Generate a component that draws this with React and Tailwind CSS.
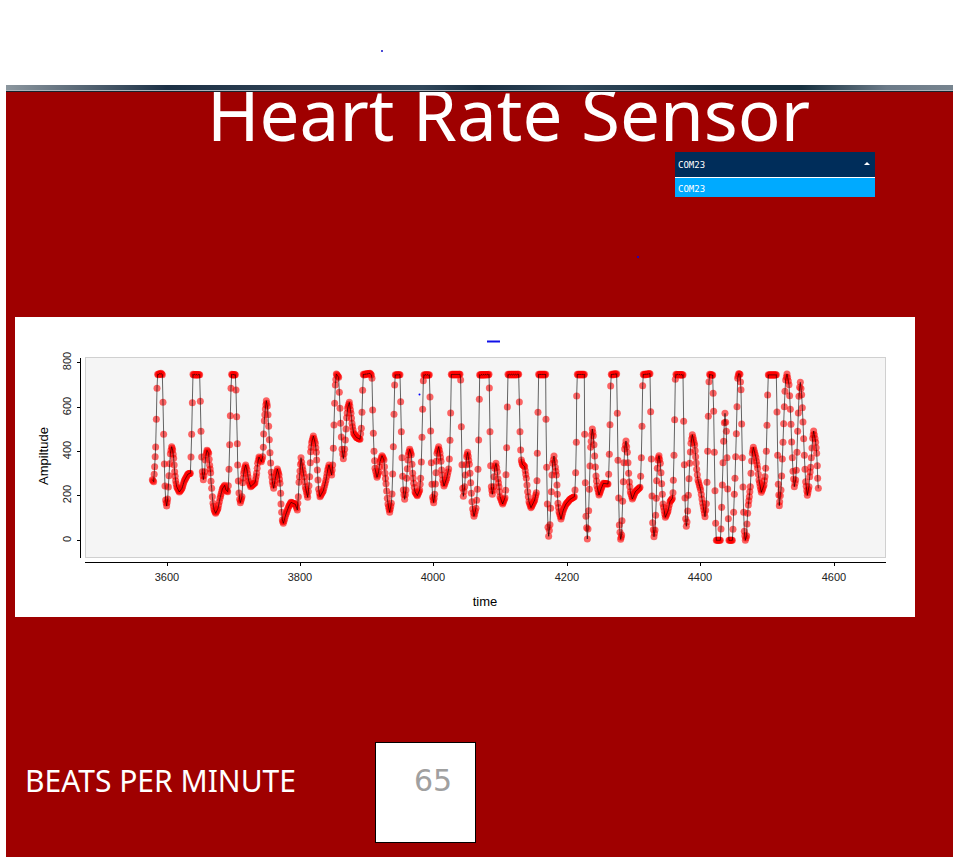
import React from "react";

// Recorded signal, in thirds of a pixel. Each section has its own x origin.
const ORIGIN_Y = -21;
const STEP = 2;
const SECTIONS = [
  {
    x: -15,
    points:
      "427,509 431,515 434,470 437,411 439,328 441,235 443,193 453,190 457,194 459,277 461,373 463,462 465,528 467,570 470,588 473,567 475,531 477,497 479,461 481,431 485,410 488,420 491,445 494,485 497,512 500,530 508,546 516,535 523,512 534,492 541,490 543,441 545,373 547,278 549,193 569,194 571,274 573,364 575,441 577,485 580,509 584,485 586,450 588,435 591,421 596,430 599,466 602,488 603,514 605,535 607,560 609,580 612,598 617,610 624,595 630,565 637,537 644,526 648,540 653,545 655,527 657,478 659,404 661,317 663,235 665,193 676,194 678,240 680,320 682,401 683,465 685,513 687,549 689,568 691,578 696,560 698,518 701,490 704,475 707,465 711,480 716,512 722,530 735,518 740,490 743,460 747,441 754,455 758,440 760,412 761,372 763,332 766,297 769,272 772,288 774,314 776,349 778,389 780,428 782,459 784,487 787,515 791,535 797,500 802,477 807,495 810,520 812,550 813,582 815,607 817,630",
  },
  {
    x: 675,
    points:
      "130,640 138,612 146,590 153,577 166,583 172,600 175,560 177,517 180,483 183,443 187,470 192,500 196,530 203,562 207,527 209,500 211,458 212,425 215,398 220,378 226,400 229,427 230,450 232,480 234,510 236,538 240,560 250,542 258,510 263,480 267,465 275,495 278,465 280,415 282,345 284,280 286,225 289,192 296,202 298,247 300,295 302,340 304,381 306,418 310,446 314,418 316,390 318,357 320,323 323,295 328,277 333,310 336,340 341,370 349,382 360,388 364,355 366,307 368,241 370,193 390,190 394,195 396,205 398,300 400,370 402,424 404,452 405,475 411,502 416,485 420,455 426,437 432,450 435,490 438,521 440,543 442,565 444,582 449,607 454,580 456,552 458,492 460,410 462,313 464,225 466,194 480,194 482,275 484,365 486,443 488,499 490,540 494,568 498,540 500,505 502,476 504,450 505,434 509,418 514,434 516,463 518,490 521,520 525,545 532,557 539,540 542,505 544,456 546,382 548,298 550,212 552,194 568,194 570,261 572,363 574,458 576,523 578,562 581,578 584,553 586,522 588,488 589,454 591,430 596,410 600,430 603,454 605,480 608,510 612,528 620,505 626,477 628,447 630,391 632,309",
  },
  {
    x: 1275,
    points:
      "34,193 60,193 62,210 64,350 66,464 68,535 70,559 74,530 76,495 78,464 80,440 83,427 88,463 90,490 92,518 94,550 96,575 98,597 102,619 108,595 110,571 112,538 114,478 116,390 118,268 119,194 147,193 148,234 150,365 152,467 154,530 157,553 161,530 162,500 164,475 168,460 172,485 174,506 177,530 180,560 188,582 195,563 197,541 198,494 200,413 202,291 204,193 236,193 238,276 240,365 242,420 244,450 247,463 254,470 259,505 263,545 267,575 273,593 284,570 289,548 291,512 292,430 294,307 296,193 317,193 318,328 320,472 322,582 324,652 326,679 330,644 332,595 334,545 336,495 338,460 342,438 346,472 349,495 351,525 352,553 354,580 357,605 363,627 370,600 378,582 390,568 403,560 405,540 407,488 409,397 410,258 412,193 433,193 434,373 436,518 438,619 442,687 444,657 446,602 448,538 450,468 452,412 455,375 457,357 460,377 462,404 464,438 466,471 468,498 471,528 477,555 484,535 490,520 504,522 506,493 508,433 510,344 512,228 514,193 530,191 532,310 534,451 536,564 538,645 542,688 545,675 546,632 548,574 550,515 552,458 554,417 558,393 562,427 564,458 566,490 568,516 571,545 577,567 586,545 600,532 602,499 604,443 606,349 608,227 610,193 630,191",
  },
  {
    x: 1875,
    points:
      "32,305 34,447 36,558 38,638 42,680 45,660 47,616 49,565 50,512 52,475 54,450 57,437 61,460 63,488 65,521 67,553 69,582 76,622 84,603 90,575 97,565 99,548 100,511 102,436 104,329 106,208 108,193 129,194 131,334 133,464 135,564 137,626 139,649 141,636 143,603 145,556 147,506 149,460 151,426 153,400 157,374 164,405 167,440 170,478 174,510 182,540 188,580 195,620 199,581 201,517 203,424 205,319 207,215 209,193 218,195 221,304 223,427 225,542 227,640 229,691 241,691 243,657 245,592 247,525 249,458 251,394 253,338 255,310 259,364 261,443 263,537 265,626 267,691 277,691 279,658 281,607 283,553 285,505 287,440 289,371 291,290 293,205 296,191 300,193 303,239 305,342 307,443 309,531 311,607 313,664 316,691 320,677 321,642 323,610 325,585 328,560 331,530 333,490 335,453 337,430 340,412 348,443 353,475 357,510 364,547 372,525 375,500 377,475 379,424 381,346 383,255 385,194 409,194 411,306 413,436 415,523 418,587 419,575 423,540 425,498 427,447 429,397 431,341 433,290 435,244 437,210 441,192 447,224 449,257 451,298 453,343 455,396 457,443 459,484 463,530 467,510 469,481 471,427 473,364 475,309 477,259 479,232 481,217 485,254 487,293 489,336 491,386 493,436 495,478 497,515 502,556 507,530 509,500 512,472 514,443 516,414 518,385 521,363 527,397 530,430 532,467 533,505 535,535",
  },
];

const knots = SECTIONS.flatMap((s) =>
  s.points.split(" ").map((pair) => {
    const [x, y] = pair.split(",").map(Number);
    return [x + s.x, y + ORIGIN_Y];
  })
);

// One sample every STEP units between neighbouring knots.
const samples = knots.flatMap(([x, y], i) => {
  if (i === knots.length - 1) return [[x, y]];
  const [nx, ny] = knots[i + 1];
  const count = Math.max(1, Math.round((nx - x) / STEP));
  return Array.from({ length: count }, (_, k) => {
    const flat = Math.abs(ny - y) < 4 && y < 190 && count > 3;
    const wobble = flat && k % 3 === 1 ? 2 : 0;
    return [x + ((nx - x) * k) / count, y + ((ny - y) * k) / count + wobble];
  });
});

const X_TICKS = [
  [3600, 152],
  [3800, 285],
  [4000, 418],
  [4200, 552],
  [4400, 685],
  [4600, 819],
];
const Y_TICKS = [
  [0, 223],
  [200, 178],
  [400, 134],
  [600, 90],
  [800, 45],
];

function Chart() {
  return (
    <svg
      viewBox="0 0 900 300"
      role="img"
      aria-label="Amplitude over time"
      className="block h-auto w-full bg-white font-['Liberation_Sans',sans-serif]"
    >
      <rect x="70.5" y="40.5" width="800" height="200" fill="#f5f5f5" stroke="#d0d0d0" />
      <g transform="scale(0.33333)">
        <g fill="#ff0000" fillOpacity="0.6">
          {samples.map(([x, y], i) => (
            <circle key={i} cx={x} cy={y} r="10.5" />
          ))}
        </g>
        <polyline
          points={samples.map((p) => p.join(",")).join(" ")}
          fill="none"
          stroke="#000"
          strokeOpacity="0.6"
          strokeWidth="3"
        />
      </g>
      <g stroke="#000" shapeRendering="crispEdges">
        <path d="M65.5 41V241M70 245.5H871" />
        {X_TICKS.map(([v, x]) => (
          <path key={v} d={`M${x + 0.5} 245V249`} />
        ))}
        {Y_TICKS.map(([v, y]) => (
          <path key={v} d={`M62 ${y + 0.5}H66`} />
        ))}
      </g>
      <g fill="#222" fontSize="11" textAnchor="middle">
        {X_TICKS.map(([v, x]) => (
          <text key={v} x={x} y="264">
            {v}
          </text>
        ))}
        {Y_TICKS.map(([v, y]) => (
          <text key={v} transform={`translate(56 ${y - 1}) rotate(-90)`}>
            {v}
          </text>
        ))}
      </g>
      <g fill="#000" fontSize="13" textAnchor="middle">
        <text x="470" y="289">
          time
        </text>
        <text transform="translate(33 139) rotate(-90)">Ampiltude</text>
      </g>
      <path d="M472 24.5H485" stroke="#1010e8" strokeWidth="2" />
      <circle cx="404.5" cy="77.5" r="1" fill="#0000ff" />
    </svg>
  );
}

function PortSelect() {
  return (
    <div className="w-[200px] font-['DejaVu_Sans_Mono',monospace] text-[9px] text-white">
      <div className="relative h-[25px] bg-[#002d5a]">
        <select
          aria-label="Serial port"
          className="h-full w-full appearance-none bg-transparent px-[3px] pt-[2px] outline-none"
        >
          <option>COM23</option>
        </select>
        <svg
          viewBox="0 0 6 3"
          className="pointer-events-none absolute top-[10px] right-[5px] h-[3px] w-[6px]"
          aria-hidden="true"
        >
          <path d="M0 3L3 0L6 3Z" fill="#fff" />
        </svg>
      </div>
      <button
        type="button"
        className="block h-[20px] w-full border-t border-white bg-[#00aaff] px-[3px] pt-[4px] text-left"
      >
        COM23
      </button>
    </div>
  );
}

export default function App() {
  return (
    <div className="flex min-h-screen flex-col bg-white pl-[6px] font-['Noto_Sans',sans-serif]">
      <div className="flex h-[85px] items-start justify-center pt-[50px] pr-[196px]">
        <span className="size-[2px] rounded-full bg-[#1010c8]" />
      </div>
      <div className="relative z-10 h-[7px] border-b-2 border-[#18222c] bg-[linear-gradient(to_right,#8c979f_0%,#1c3045_17%,#2d4052_30%,#30475a_44%,#1a2f42_50%,#30475a_60%,#17303f_75%,#17303f_84%,#6b7a88_93%,#77848f_100%)]">
        <div className="mt-[4px] h-px translate-y-full bg-[#a9b2ba]" />
      </div>
      <main className="flex grow flex-col bg-[#9f0000]">
        <header className="flex h-[60px] items-end justify-center pl-[58px]">
          <h1 className="text-[71px] leading-[76px] whitespace-nowrap text-white">
            Heart Rate Sensor
          </h1>
        </header>
        <div className="flex h-[165px] items-start justify-end pr-[78px]">
          <span className="mt-[104px] mr-[36px] size-[2px] rounded-full bg-[#0000f0]" />
          <PortSelect />
        </div>
        <section className="mr-[38px] ml-[9px]">
          <Chart />
        </section>
        <section className="mt-[125px] mb-[14px] flex pl-[19px]">
          <label htmlFor="bpm" className="w-[350px] pt-[19px] text-[30px] leading-[40px] text-white">
            BEATS PER MINUTE
          </label>
          <output
            id="bpm"
            className="h-[101px] w-[101px] border border-black bg-white pt-[18px] pl-[38px] font-['DejaVu_Sans',sans-serif] text-[30px] leading-[40px] text-[#a0a0a0]"
          >
            65
          </output>
        </section>
      </main>
    </div>
  );
}
